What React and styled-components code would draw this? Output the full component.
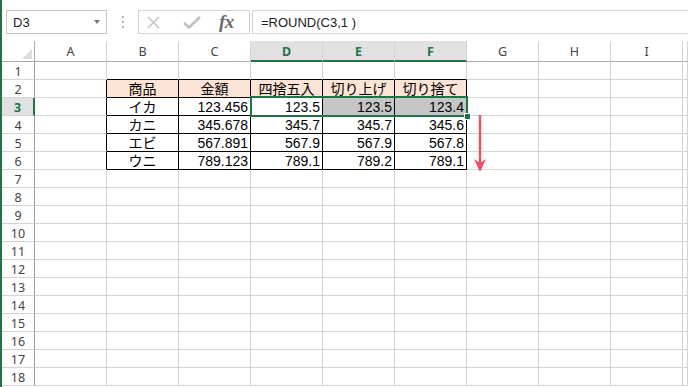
import React from "react";
import styled, { createGlobalStyle } from "styled-components";

const GREEN = "#217346";
const GRID = "#d4d4d4";

const GlobalStyle = createGlobalStyle`
  html, body {
    margin: 0;
    padding: 0;
    background: #fff;
  }
  body {
    font-family: "Liberation Sans", "Noto Sans CJK JP", sans-serif;
  }
`;

const Window = styled.div`
  width: 688px;
  height: 387px;
  overflow: hidden;
  box-sizing: border-box;
  border-left: 2px solid ${GREEN};
  background: #fff;
`;

const FormulaBar = styled.div`
  display: flex;
  align-items: flex-start;
  height: 41px;
  padding: 10px 0 0 4px;
  box-sizing: border-box;
`;

const NameBox = styled.div`
  width: 101px;
  height: 24px;
  box-sizing: border-box;
  border: 1px solid #c6c6c6;
  display: flex;
  align-items: center;
  justify-content: space-between;
  padding: 0 6px;
  font-size: 13px;
  color: #222;
`;

const Caret = styled.span`
  width: 0;
  height: 0;
  border-left: 3.5px solid transparent;
  border-right: 3.5px solid transparent;
  border-top: 4px solid #777;
`;

const Grip = styled.div`
  width: 31px;
  height: 24px;
  display: flex;
  flex-direction: column;
  align-items: center;
  justify-content: center;
  gap: 3px;
`;

const Dot = styled.span`
  width: 2px;
  height: 2px;
  background: #b4b4b4;
`;

const ToolBox = styled.div`
  width: 112px;
  height: 24px;
  box-sizing: border-box;
  border: 1px solid ${GRID};
  display: flex;
  align-items: center;
  padding-left: 8px;
`;

const ToolIcon = styled.svg`
  margin-left: ${(p) => p.$gap || 0}px;
  flex: none;
`;

const Fx = styled.span`
  margin-left: 18px;
  font-family: "Liberation Serif", serif;
  font-style: italic;
  font-weight: bold;
  font-size: 19px;
  color: #6a6a6a;
  letter-spacing: -0.5px;
  line-height: 22px;
`;

const FormulaInput = styled.div`
  flex: 1;
  margin-left: 2px;
  height: 24px;
  box-sizing: border-box;
  border: 1px solid ${GRID};
  border-right: none;
  display: flex;
  align-items: center;
  padding-left: 8px;
  font-size: 13px;
  color: #222;
  white-space: nowrap;
`;

const Sheet = styled.div`
  position: relative;
  display: grid;
  grid-template-columns: 33px repeat(9, 72px) 1fr;
  grid-template-rows: 21px repeat(18, 18px);
`;

const Corner = styled.div`
  box-sizing: border-box;
  border-right: 1px solid #ababab;
  border-bottom: 1px solid #ababab;
  display: flex;
  align-items: flex-end;
  justify-content: flex-end;
  padding: 0 2px 2px 0;
`;

const CornerMark = styled.span`
  width: 0;
  height: 0;
  border-left: 10px solid transparent;
  border-bottom: 10px solid #dcdcdc;
`;

const ColHead = styled.div`
  box-sizing: border-box;
  display: flex;
  align-items: center;
  justify-content: center;
  font-family: "Noto Sans", "Liberation Sans", sans-serif;
  font-size: 12.5px;
  border-right: 1px solid ${GRID};
  border-bottom: ${(p) => (p.$active ? `2px solid ${GREEN}` : "1px solid #ababab")};
  background: ${(p) => (p.$active ? "#e1e1e1" : "#fff")};
  color: ${(p) => (p.$active ? GREEN : "#444")};
  font-weight: ${(p) => (p.$active ? "bold" : "normal")};
  padding-top: 1px;
`;

const RowHead = styled.div`
  box-sizing: border-box;
  display: flex;
  align-items: center;
  justify-content: center;
  font-family: "Noto Sans", "Liberation Sans", sans-serif;
  font-size: 12.5px;
  padding-top: 2px;
  border-bottom: 1px solid ${GRID};
  border-right: ${(p) => (p.$active ? `2px solid ${GREEN}` : "1px solid #9e9e9e")};
  background: ${(p) => (p.$active ? "#e1e1e1" : "#fff")};
  color: ${(p) => (p.$active ? GREEN : "#444")};
  font-weight: ${(p) => (p.$active ? "bold" : "normal")};
`;

const Cell = styled.div`
  box-sizing: border-box;
  border-right: 1px solid ${(p) => p.$rb};
  border-bottom: 1px solid ${(p) => p.$bb};
  background: ${(p) => p.$bg};
  text-align: ${(p) => p.$align};
  font-size: 14px;
  line-height: 18px;
  padding: 0 2px;
  color: #000;
  white-space: nowrap;
  overflow: hidden;
`;

const Selection = styled.div`
  position: absolute;
  left: 248px;
  top: 55px;
  width: 218px;
  height: 21px;
  box-sizing: border-box;
  border: 2px solid ${GREEN};
  pointer-events: none;
`;

const FillHandle = styled.span`
  position: absolute;
  right: -5px;
  bottom: -5px;
  width: 5px;
  height: 5px;
  background: ${GREEN};
  border: 1px solid #fff;
`;

const Arrow = styled.svg`
  position: absolute;
  left: 471px;
  top: 74px;
`;

const COLS = ["A", "B", "C", "D", "E", "F", "G", "H", "I", ""];
const ACTIVE_COLS = ["D", "E", "F"];

const TABLE = {
  2: ["商品", "金額", "四捨五入", "切り上げ", "切り捨て"],
  3: ["イカ", "123.456", "123.5", "123.5", "123.4"],
  4: ["カニ", "345.678", "345.7", "345.7", "345.6"],
  5: ["エビ", "567.891", "567.9", "567.9", "567.8"],
  6: ["ウニ", "789.123", "789.1", "789.2", "789.1"],
};

function cellProps(r, c) {
  const inRows = r >= 2 && r <= 6;
  const inCols = c >= 2 && c <= 6;
  const inTable = inRows && inCols;
  let bg = "#fff";
  if (r === 2 && inCols) bg = "#fce4d6";
  if (r === 3 && (c === 5 || c === 6)) bg = "#c6c6c6";
  return {
    $rb: inTable || (inRows && c === 1) ? "#000" : GRID,
    $bb: inTable || (r === 1 && inCols) ? "#000" : GRID,
    $bg: bg,
    $align: r === 2 || c === 2 ? "center" : "right",
  };
}

function App() {
  const rows = Array.from({ length: 18 }, (_, i) => i + 1);
  return (
    <Window>
      <GlobalStyle />
      <FormulaBar>
        <NameBox>
          <span>D3</span>
          <Caret />
        </NameBox>
        <Grip>
          <Dot />
          <Dot />
          <Dot />
        </Grip>
        <ToolBox>
          <ToolIcon width="13" height="13" viewBox="0 0 13 13">
            <path d="M1 1 L12 12 M12 1 L1 12" stroke="#c4c4c4" strokeWidth="1.6" fill="none" />
          </ToolIcon>
          <ToolIcon $gap={23} width="18" height="13" viewBox="0 0 18 13">
            <path d="M1 7 L6 11.5 L17 1" stroke="#c0c0c0" strokeWidth="2.6" fill="none" />
          </ToolIcon>
          <Fx>fx</Fx>
        </ToolBox>
        <FormulaInput>=ROUND(C3,1 )</FormulaInput>
      </FormulaBar>

      <Sheet>
        <Corner>
          <CornerMark />
        </Corner>
        {COLS.map((col, i) => (
          <ColHead key={"h" + i} $active={ACTIVE_COLS.includes(col)}>
            {col}
          </ColHead>
        ))}
        {rows.map((r) => (
          <React.Fragment key={r}>
            <RowHead $active={r === 3}>{r}</RowHead>
            {COLS.map((col, i) => {
              const c = i + 1;
              const data = TABLE[r];
              const text = data && c >= 2 && c <= 6 ? data[c - 2] : "";
              return (
                <Cell key={col + r + i} {...cellProps(r, c)}>
                  {text}
                </Cell>
              );
            })}
          </React.Fragment>
        ))}
        <Selection>
          <FillHandle />
        </Selection>
        <Arrow width="14" height="58" viewBox="0 0 14 58">
          <line x1="7" y1="0" x2="7" y2="50" stroke="#f0505c" strokeWidth="2.4" />
          <path d="M1 44 L7 57 L13 44 L7 48 Z" fill="#f0505c" />
        </Arrow>
      </Sheet>
    </Window>
  );
}

export default App;
